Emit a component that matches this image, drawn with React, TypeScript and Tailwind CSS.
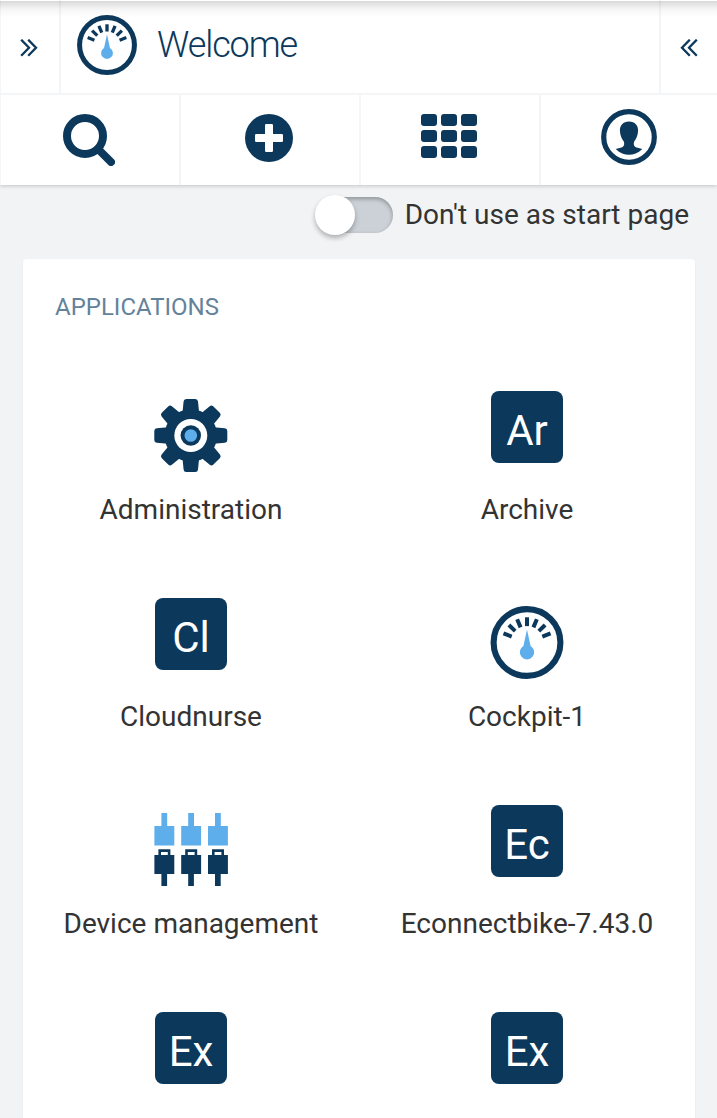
import React from "react";

function Gauge({ className }: { className: string }) {
  return (
    <svg viewBox="-36.5 -36.5 73 73" className={className}>
      <circle r="33.4" fill="none" stroke="#0b385b" strokeWidth="6.1" />
      {[-69, -46, -23, 0, 23, 46, 69].map((angle) => (
        <rect key={angle} x="-2" y="-25.2" width="4" height="8.8" fill="#0b385b" transform={`rotate(${angle})`} />
      ))}
      <path d="M0 -13 L3.6 3.5 A7.2 7.2 0 1 1 -3.6 3.5 Z" fill="#5eaeec" />
    </svg>
  );
}

function Gear() {
  return (
    <svg viewBox="-36.8 -36.5 74 73" className="h-[73px] w-[74px]">
      <g fill="#0b385b">
        <circle r="26.3" />
        {[0, 45, 90, 135, 180, 225, 270, 315].map((angle) => (
          <path
            key={angle}
            d="M-8.3 -23 L-7.2 -34 Q-7 -36.5 -4.5 -36.5 H4.5 Q7 -36.5 7.2 -34 L8.3 -23 Z"
            transform={`rotate(${angle})`}
          />
        ))}
      </g>
      <circle r="16.5" fill="#fff" />
      <circle r="10.2" fill="#0b385b" />
      <circle r="6.3" fill="#5eaeec" />
    </svg>
  );
}

function Plugs() {
  return (
    <svg viewBox="0 0 74 73" className="h-[73px] w-[74px]">
      {[0.2, 27, 53.8].map((x) => (
        <g key={x} transform={`translate(${x} 0)`}>
          <path d="M7.2 0h5.8v13h7.1v19.6H0.2V13h7z" fill="#5eaeec" />
          <path
            fillRule="evenodd"
            d="M4.2 36.2h12V42h3.9v19h-7.2v12H7.2V61h-7V42h4zM6.8 39v3h6.8v-3z"
            fill="#0b385b"
          />
        </g>
      ))}
    </svg>
  );
}

function Chevrons({ flip = false }: { flip?: boolean }) {
  return (
    <svg viewBox="0 0 18 18" className={flip ? "h-[18px] w-[18px] -scale-x-100" : "h-[18px] w-[18px]"}>
      <path d="M1.2 0.7 L9 8.7 L1.2 16.7 M8.2 0.7 L16 8.7 L8.2 16.7" fill="none" stroke="#0b385b" strokeWidth="2.3" />
    </svg>
  );
}

function Tile({ text }: { text: string }) {
  return (
    <div className="flex size-[72px] items-center justify-center rounded-lg bg-[#0b385b] pt-[7px] text-[42px] leading-none text-white">
      {text}
    </div>
  );
}

function AppCell({ label, drawn = false, children }: { label: string; drawn?: boolean; children: React.ReactNode }) {
  return (
    <div className="flex h-[207px] flex-col items-center">
      <div className={drawn ? "flex h-[99px] items-start pt-2" : "flex h-[99px] items-start"}>{children}</div>
      <div className="text-[28px] leading-[40px] whitespace-nowrap">{label}</div>
    </div>
  );
}

export default function App() {
  return (
    <div className="flex h-[1118px] w-[717px] flex-col overflow-hidden bg-[#f1f3f5] font-['Roboto',sans-serif] text-[#333]">
      <header className="relative z-10 h-[185px] shrink-0 border-l border-[#f3f5f6] bg-white shadow-[0_1px_4px_rgba(0,0,0,0.2)]">
        <div className="pointer-events-none absolute top-px -left-px h-4 w-[717px] bg-linear-to-b from-black/15 via-black/4 to-transparent" />
        <div className="flex h-[95px] border-b-2 border-[#f3f5f6]">
          <button className="flex w-[60px] items-center border-r-2 border-[#f3f5f6] pt-[3px] pl-[19px]">
            <Chevrons />
          </button>
          <div className="flex flex-1 items-center pb-[3px] pl-4">
            <Gauge className="size-[60px]" />
            <h1 className="ml-5 pb-px text-[36px] leading-[48px] font-light tracking-[-1.1px] text-[#0b385b]">Welcome</h1>
          </div>
          <button className="flex w-[58px] items-center border-l-2 border-[#f3f5f6] pt-[3px] pl-[19px]">
            <Chevrons flip />
          </button>
        </div>
        <nav className="flex h-[90px]">
          <button className="flex w-[180px] items-start border-r-2 border-[#f3f5f6] pt-[19px] pl-[62px]">
            <svg viewBox="0 0 52 52" className="block size-[52px]">
              <circle cx="22" cy="22" r="18" fill="none" stroke="#0b385b" strokeWidth="8" />
              <path d="M35 35 L48 48" stroke="#0b385b" strokeWidth="8" strokeLinecap="round" />
            </svg>
          </button>
          <button className="flex w-[180px] items-start border-r-2 border-[#f3f5f6] pt-[19px] pl-[64px]">
            <svg viewBox="0 0 48 48" className="block size-12">
              <circle cx="24" cy="24" r="24" fill="#0b385b" />
              <rect x="20" y="10" width="8" height="28" rx="1.2" fill="#fff" />
              <rect x="10" y="20" width="28" height="8" rx="1.2" fill="#fff" />
            </svg>
          </button>
          <button className="flex w-[180px] items-start border-r-2 border-[#f3f5f6] pt-[19px] pl-[60px]">
            <span className="grid w-14 grid-cols-3 gap-1">
              {Array.from({ length: 9 }, (_, i) => (
                <span key={i} className="h-3 rounded-[3px] bg-[#0b385b]" />
              ))}
            </span>
          </button>
          <button className="flex flex-1 items-start pt-[14px] pl-[60px]">
            <svg viewBox="-28 -28 56 56" className="block size-14">
              <circle r="25.3" fill="none" stroke="#0b385b" strokeWidth="5.2" />
              <path
                d="M0 -15.5 C6 -15.5 9.2 -11.5 9.1 -6.5 C9 -1.5 7 2 5.2 4.5 C4 8 5.5 10.2 8.5 10.8 L13.3 12 C9 16.2 4.5 17.8 0 17.8 C-4.5 17.8 -9 16.2 -13.3 12 L-8.5 10.8 C-5.5 10.2 -4 8 -5.2 4.5 C-7 2 -9 -1.5 -9.1 -6.5 C-9.2 -11.5 -6 -15.5 0 -15.5Z"
                fill="#0b385b"
              />
            </svg>
          </button>
        </nav>
      </header>
      <label className="flex h-[74px] shrink-0 items-start justify-end pt-[10px] pr-7">
        <span className="flex w-[78px]">
          <span className="mt-[2px] ml-[2px] h-9 w-[76px] rounded-full bg-[#cbd1d6] shadow-[inset_0_2px_4px_rgba(0,0,0,0.3)]">
            <span className="-mt-[2px] -ml-[2px] block size-10 rounded-full bg-white shadow-[0_3px_5px_rgba(0,0,0,0.28)]" />
          </span>
        </span>
        <span className="ml-3 text-[28px] leading-[40px] whitespace-nowrap">Don't use as start page</span>
      </label>
      <main className="ml-[23px] h-[880px] w-[672px] shrink-0 rounded-t bg-white shadow-[0_1px_2px_rgba(0,0,0,0.08)]">
        <h2 className="pt-7 pl-8 text-[24px] leading-[40px] text-[#64839b]">APPLICATIONS</h2>
        <div className="grid grid-cols-2 pt-16">
          <AppCell label="Administration" drawn><Gear /></AppCell>
          <AppCell label="Archive"><Tile text="Ar" /></AppCell>
          <AppCell label="Cloudnurse"><Tile text="Cl" /></AppCell>
          <AppCell label="Cockpit-1" drawn><Gauge className="h-[73px] w-[74px]" /></AppCell>
          <AppCell label="Device management" drawn><Plugs /></AppCell>
          <AppCell label="Econnectbike-7.43.0"><Tile text="Ec" /></AppCell>
          <AppCell label=""><Tile text="Ex" /></AppCell>
          <AppCell label=""><Tile text="Ex" /></AppCell>
        </div>
      </main>
    </div>
  );
}
